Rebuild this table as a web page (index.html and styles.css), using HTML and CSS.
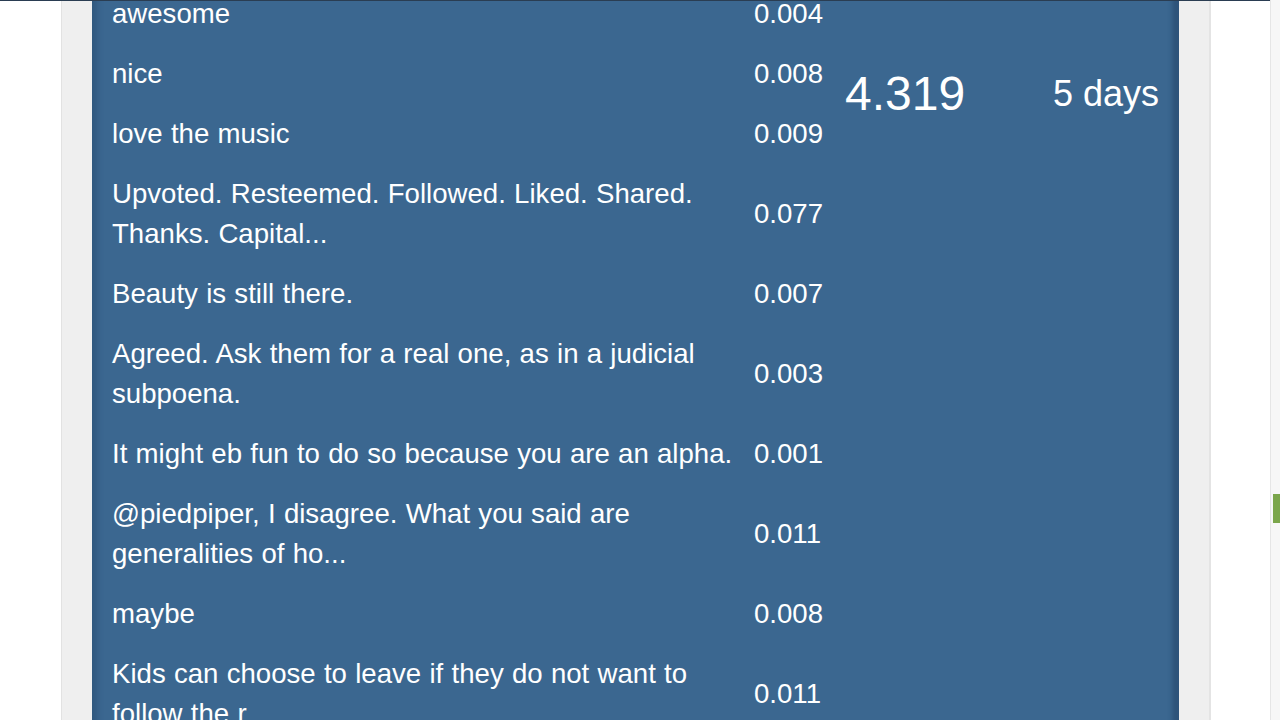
FILE: index.html
```html
<!DOCTYPE html>
<html>
<head>
<meta charset="utf-8">
<link rel="stylesheet" href="styles.css">
</head>
<body>
<div class="topline"></div>
<div class="page">
  <div class="frame">
    <div class="panel">
      <div class="comments">
        <div class="row"><div class="txt">awesome</div><div class="val">0.004</div></div>
        <div class="row"><div class="txt">nice</div><div class="val">0.008</div></div>
        <div class="row"><div class="txt">love the music</div><div class="val">0.009</div></div>
        <div class="row"><div class="txt">Upvoted. Resteemed. Followed. Liked. Shared. Thanks. Capital...</div><div class="val">0.077</div></div>
        <div class="row"><div class="txt">Beauty is still there.</div><div class="val">0.007</div></div>
        <div class="row"><div class="txt">Agreed. Ask them for a real one, as in a judicial subpoena.</div><div class="val">0.003</div></div>
        <div class="row"><div class="txt">It might eb fun to do so because you are an alpha.</div><div class="val">0.001</div></div>
        <div class="row"><div class="txt">@piedpiper, I disagree. What you said are generalities of ho...</div><div class="val">0.011</div></div>
        <div class="row"><div class="txt">maybe</div><div class="val">0.008</div></div>
        <div class="row"><div class="txt">Kids can choose to leave if they do not want to follow the r...</div><div class="val">0.011</div></div>
      </div>
      <div class="payout">4.319</div>
      <div class="age">5 days</div>
    </div>
  </div>
  <div class="scrollbar"><div class="thumb"></div></div>
</div>
</body>
</html>
```
FILE: styles.css
```css
html, body {
  margin: 0;
  padding: 0;
  background: #ffffff;
  overflow: hidden;
  height: 720px;
}
body {
  font-family: "Liberation Sans", Arial, sans-serif;
  color: #ffffff;
  position: relative;
}
.topline {
  position: absolute;
  left: 0;
  top: 0;
  width: 1270px;
  height: 1px;
  background: #2a3d52;
  z-index: 5;
}
.page {
  display: flex;
  height: 720px;
}
.frame {
  margin-left: 61px;
  width: 1150px;
  height: 720px;
  background: #efefef;
  border-left: 1px solid #e2e2e2;
  border-right: 2px solid #e4e4e4;
  padding: 0 30px;
  box-sizing: border-box;
  overflow: hidden;
}
.panel {
  background: #3b6790;
  display: flex;
  align-items: flex-start;
  margin-top: -16px;
  min-height: 780px;
  box-shadow: inset 9px 0 6px -4px rgba(30, 60, 95, 0.35), inset -9px 0 4px -2px rgba(30, 60, 95, 0.45);
}
.comments {
  padding-left: 20px;
  width: 732px;
  flex: none;
}
.row {
  display: grid;
  grid-template-columns: 642px 90px;
  align-items: center;
  padding: 10px 0;
  font-size: 27.6px;
  line-height: 40px;
  word-spacing: 0.6px;
}
.txt {
  padding-right: 14px;
}
.val {
  white-space: nowrap;
}
.payout {
  font-size: 48px;
  line-height: 60px;
  margin-top: 80px;
  margin-left: 1px;
  flex: none;
}
.age {
  flex: 1;
  text-align: right;
  font-size: 36px;
  line-height: 60px;
  margin-top: 80px;
  padding-right: 20px;
}
.scrollbar {
  margin-left: auto;
  width: 9px;
  height: 720px;
  background: #f7f7f7;
  border-left: 1px solid #e6e6e6;
  position: relative;
}
.thumb {
  position: absolute;
  left: 2px;
  right: 0;
  top: 494px;
  height: 29px;
  background: #7ba64b;
}
```
